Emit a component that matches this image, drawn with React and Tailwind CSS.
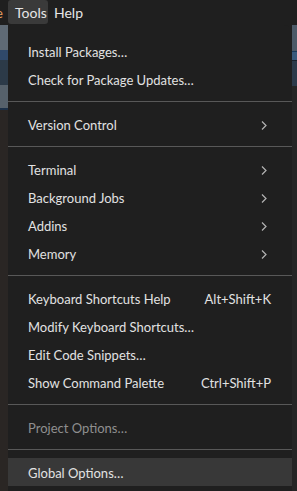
import React from 'react'

const groups = [
  [
    { label: 'Install Packages…' },
    { label: 'Check for Package Updates…' },
  ],
  [{ label: 'Version Control', sub: true }],
  [
    { label: 'Terminal', sub: true },
    { label: 'Background Jobs', sub: true },
    { label: 'Addins', sub: true },
    { label: 'Memory', sub: true },
  ],
  [
    { label: 'Keyboard Shortcuts Help', keys: 'Alt+Shift+K' },
    { label: 'Modify Keyboard Shortcuts…' },
    { label: 'Edit Code Snippets…' },
    { label: 'Show Command Palette', keys: 'Ctrl+Shift+P' },
  ],
  [{ label: 'Project Options…', disabled: true }],
  [{ label: 'Global Options…', active: true }],
]

const Chevron = () => (
  <svg width="6" height="9" viewBox="0 0 6 9" fill="none" className="mr-[25px]">
    <path d="M1 0.5 L5 4.5 L1 8.5" stroke="#b4b4b4" strokeWidth="1.2" />
  </svg>
)

const Item = ({ item }) => (
  <div
    className={
      'h-7 flex items-center justify-between pl-5 pt-[3px] ' +
      (item.active ? 'bg-[#383838] ' : '') +
      (item.disabled ? 'text-[#8f8f8f]' : 'text-[#e2e2e2]')
    }
  >
    <span>{item.label}</span>
    {item.sub && <Chevron />}
    {item.keys && <span className="mr-[21px]">{item.keys}</span>}
  </div>
)

export default function App() {
  return (
    <div className="w-[297px] h-[491px] overflow-hidden bg-[#1f1f1f] flex flex-col text-[13px] font-['Lato',sans-serif]">
      {/* menu bar */}
      <div className="h-[25px] shrink-0 flex items-start text-[#e6e6e6] text-[14px]">
        <span className="w-2 h-6 overflow-hidden flex items-center justify-end pr-[5px] text-[#e8a060]">
          <span className="shrink-0">e</span>
        </span>
        <span className="h-6 w-10 pl-[7px] pt-px flex items-center bg-[#3a3a3a] rounded-[3px]">Tools</span>
        <span className="h-6 pl-[6px] pt-px flex items-center">Help</span>
      </div>

      <div className="flex-1 flex">
        {/* left backdrop */}
        <div className="w-2 shrink-0 flex flex-col">
          <div className="h-[25px] bg-[#5f6a75]" />
          <div className="h-[10px] bg-[#30496a]" />
          <div className="h-[25px] bg-[#2c3a48]" />
          <div className="h-[23px] bg-[#56616b]" />
          <div className="h-[2px] bg-[#1c3048]" />
          <div className="flex-1 bg-[#2a2624]" />
        </div>

        {/* dropdown */}
        <div className="flex-1 bg-[#1f1f1f] rounded-tr-[8px] rounded-tl-[3px] pt-3">
          {groups.map((g, gi) => (
            <div key={gi}>
              {gi > 0 && (
                <div className="h-[17px] flex items-center">
                  <div className="h-px w-full bg-[#585858]" />
                </div>
              )}
              {g.map((item, i) => (
                <Item key={i} item={item} />
              ))}
            </div>
          ))}
        </div>

        {/* right backdrop */}
        <div className="w-[5px] shrink-0 flex flex-col">
          <div className="h-[26px] bg-[#4c5a68]" />
          <div className="h-px bg-[#1a3a5a]" />
          <div className="h-[8px] bg-[#3a5a7c]" />
          <div className="h-px bg-[#18222c]" />
          <div className="h-[25px] bg-[#2c3a4a]" />
          <div className="flex-1 bg-[#252525]" />
        </div>
      </div>
    </div>
  )
}
